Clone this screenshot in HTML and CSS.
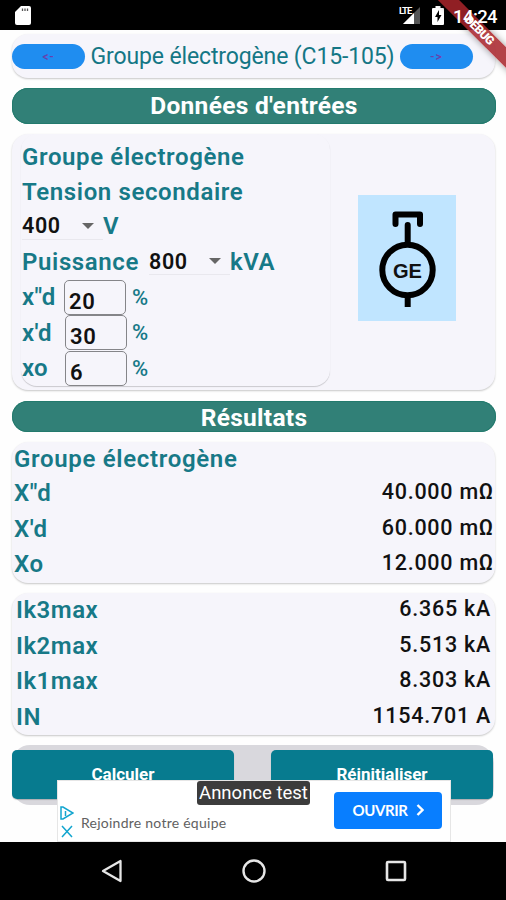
FILE: index.html
```html
<!DOCTYPE html>
<html lang="fr">
<head>
<meta charset="utf-8">
<title>Groupe électrogène</title>
<link rel="stylesheet" href="styles.css">
</head>
<body>
<div class="phone">
  <header class="status">
    <svg class="sd" width="16" height="20" viewBox="0 0 16 20"><path d="M6 1h8q2 0 2 2v15q0 2-2 2H2q-2 0-2-2V7z" fill="#fff"/><path d="M7.500 3.500v2.500M10 3.500v2.500M12.500 3.500v2.500" stroke="#555" stroke-width="1.300"/></svg>
    <div class="status-right">
      <svg class="signal" width="22" height="20" viewBox="0 0 22 20"><path d="M21 2v17H4z" fill="#555"/><path d="M15 8V19H4z" fill="#fff"/><text class="lte" x="0" y="9">LTE</text></svg>
      <svg class="battery" width="12" height="19" viewBox="0 0 12 19"><path d="M3.500 0h5v2H11q1 0 1 1v15q0 1-1 1H1q-1 0-1-1V3q0-1 1-1h2.500z" fill="#fff"/><path d="M7 4 3 11h2.500v5L9.500 9H7z" fill="#000"/></svg>
      <span class="clock">14:24</span>
    </div>
  </header>
  <div class="debug"><span>DEBUG</span></div>
  <main class="content">
    <section class="card topbar">
      <button class="pill">&lt;-</button>
      <h1 class="title">Groupe électrogène (C15-105)</h1>
      <button class="pill">-&gt;</button>
    </section>
    <h2 class="banner">Données d'entrées</h2>
    <section class="card inputs">
      <div class="form">
        <div class="row">Groupe électrogène</div>
        <div class="row secondary">Tension secondaire</div>
        <div class="row"><span class="select">400<i class="caret"></i></span><span class="unit">V</span></div>
        <div class="row"><span class="power">Puissance</span><span class="select">800<i class="caret"></i></span><span class="unit">kVA</span></div>
        <div class="row"><span class="name">x"d</span><span class="field first">20</span><span class="percent">%</span></div>
        <div class="row"><span class="name">x'd</span><span class="field">30</span><span class="percent">%</span></div>
        <div class="row"><span class="name">xo</span><span class="field">6</span><span class="percent">%</span></div>
      </div>
      <div class="diagram">
        <svg width="98" height="126" viewBox="0 0 98 126"><path fill="#c0e5ff" d="M0 0h98v126H0z"/><g fill="none" stroke="#000" stroke-width="6"><path d="M37.500 29V19.500h24.500V29M49.700 30v18" stroke-linecap="round" stroke-linejoin="round"/><circle cx="49.500" cy="75" r="25.200"/><path d="M49.700 101v11"/></g><text class="ge" x="49.500" y="82.500" text-anchor="middle" textLength="29" lengthAdjust="spacingAndGlyphs">GE</text></svg>
      </div>
    </section>
    <h2 class="banner results">Résultats</h2>
    <section class="card values">
      <div class="line heading"><span>Groupe électrogène</span></div>
      <div class="line"><span>X"d</span><b>40.000 mΩ</b></div>
      <div class="line"><span>X'd</span><b>60.000 mΩ</b></div>
      <div class="line"><span>Xo</span><b>12.000 mΩ</b></div>
    </section>
    <section class="card values currents">
      <div class="line"><span>Ik3max</span><b>6.365 kA</b></div>
      <div class="line"><span>Ik2max</span><b>5.513 kA</b></div>
      <div class="line"><span>Ik1max</span><b>8.303 kA</b></div>
      <div class="line"><span>IN</span><b>1154.701 A</b></div>
    </section>
    <section class="actions">
      <button class="action">Calculer</button>
      <button class="action">Réinitialiser</button>
    </section>
  </main>
  <aside class="ad">
    <svg class="adchoices" width="14" height="33" viewBox="0 0 14 33"><path d="M1 1v12h2L13 7 3 1zM5.500 5v5" fill="none" stroke="#12a5cf" stroke-width="1.500"/><path d="m2 20 10 11M12 20 2 31" fill="none" stroke="#12a5cf" stroke-width="1.500"/></svg>
    <span class="ad-text">Rejoindre notre équipe</span>
    <span class="ad-label">Annonce test</span>
    <button class="open">OUVRIR<svg width="8" height="12" viewBox="0 0 8 12"><path d="m1.500 1 5 5-5 5" fill="none" stroke="#fff" stroke-width="2.400"/></svg></button>
  </aside>
  <nav class="nav">
    <svg width="24" height="26" viewBox="0 0 24 26"><path d="M20.500 3v20L3 13z" fill="none" stroke="#e6e6e6" stroke-width="2.300" stroke-linejoin="round"/></svg>
    <svg width="24" height="26" viewBox="0 0 24 26"><circle cx="12" cy="13" r="10.500" fill="none" stroke="#e6e6e6" stroke-width="2.400"/></svg>
    <svg width="24" height="26" viewBox="0 0 24 26"><rect x="3" y="4" width="18" height="18" rx="1" fill="none" stroke="#e6e6e6" stroke-width="2.600"/></svg>
  </nav>
</div>
</body>
</html>
```
FILE: styles.css
```css
* { box-sizing: border-box; }
body { margin: 0; font-family: Roboto, sans-serif; background: #fff; }
button { border: 0; padding: 0; font-family: inherit; }
h1, h2 { margin: 0; }
.phone { position: relative; width: 506px; height: 900px; overflow: hidden; display: flex; flex-direction: column; background: #fefefe; }
.status { height: 30px; flex: none; background: #000; display: flex; align-items: center; justify-content: space-between; padding: 0 9px 0 15px; }
.status-right { display: flex; align-items: center; }
.signal { margin-right: 11px; }
.lte { font: 700 9.5px Roboto, sans-serif; fill: #fff; letter-spacing: -1px; }
.battery { margin-right: 9px; }
.clock { color: #fff; font-size: 18.5px; font-weight: 500; line-height: 30px; letter-spacing: -0.6px; padding-top: 3px; position: relative; z-index: 2; }
.debug { position: absolute; left: 419px; top: 23px; width: 120px; height: 15px; background: rgba(168, 36, 42, .86); transform: rotate(45deg); box-shadow: 0 0 7px rgba(0, 0, 0, .4); color: #fff; font-size: 12px; font-weight: 900; line-height: 15px; text-align: center; letter-spacing: -0.6px; }
.content { flex: 1; padding: 4px 10px 0 12px; }
.card { width: 483px; background: #f6f5fb; border-radius: 16px; box-shadow: 0 1px 2px rgba(0, 0, 0, .22); }
.topbar { height: 44px; display: flex; justify-content: space-between; padding: 10px 22px 9px 0; }
.pill { width: 73px; height: 25px; border-radius: 13px; background: #1f8df0; color: #6841ad; font-size: 12px; font-weight: 500; letter-spacing: 1px; }
.title { color: #147785; font-size: 23px; font-weight: 400; line-height: 25px; letter-spacing: -0.13px; white-space: nowrap; }
.banner { width: 484px; height: 36px; margin: 10px 0; border-radius: 16px; background: #318077; color: #fff; font-size: 24.5px; font-weight: 700; line-height: 36px; letter-spacing: 0.3px; text-align: center; box-shadow: inset 0 0 0 1px #237a6d; }
.inputs { height: 256px; display: flex; padding-left: 9px; }
.form { width: 309px; height: 252px; padding: 5px 0 0 1px; border-radius: 16px; box-shadow: 0 1px 1px rgba(0, 0, 0, .18); color: #177987; font-size: 24px; font-weight: 600; letter-spacing: 0.62px; }
.row { height: 35.500px; display: flex; align-items: center; white-space: nowrap; }
.row.secondary { height: 34px; }
.power { width: 127px; }
.select { width: 81px; height: 27px; display: flex; align-items: center; color: #111; font-size: 21.500px; border-bottom: 1px solid #e9e8ee; }
.caret { margin-left: auto; margin-right: 9px; border: 6px solid transparent; border-top-color: #666; border-bottom: 0; }
.name { width: 43px; letter-spacing: 0.3px; }
.field { width: 62px; height: 35px; border: 1px solid #858589; border-radius: 5px; padding: 6px 0 0 4px; color: #111; font-size: 22px; line-height: 30px; }
.field.first { margin: 0 1px 0 -1px; }
.percent { margin-left: 5px; font-size: 22px; font-weight: 500; letter-spacing: 0; }
.diagram { flex: 1; display: flex; align-items: center; padding: 0 0 9px 28px; }
.ge { font: 700 21px "Liberation Sans", sans-serif; fill: #111; }
.banner.results { height: 31px; line-height: 34px; margin-top: 11px; }
.values { height: 141px; padding: 0 2px; margin-bottom: 11px; }
.line { height: 35.700px; display: flex; justify-content: space-between; align-items: center; color: #177987; font-size: 24px; font-weight: 600; letter-spacing: 0.5px; padding-bottom: 2px; }
.line.heading { height: 34px; letter-spacing: 0.67px; padding-bottom: 0; }
.line b { color: #111; font-size: 21.500px; font-weight: 500; letter-spacing: 0.75px; margin-right: -1px; padding-bottom: 3px; }
.currents { height: 142px; padding: 0 5px 0 4px; margin-top: -1px; margin-bottom: 10px; }
.actions { width: 482px; height: 60px; background: #d9d8dd; border-radius: 18px; display: flex; justify-content: space-between; padding-top: 5px; }
.action { width: 222px; height: 49px; border-radius: 5px; background: #077b8f; color: #fff; font-size: 17px; font-weight: 700; padding-bottom: 2px; box-shadow: 0 1px 1px rgba(0, 0, 0, .2); }
.action + .action { margin-right: 1px; }
.ad { position: absolute; left: 57px; top: 780px; width: 394px; height: 62px; background: #fff; border: 1px solid #e6e6e6; display: flex; align-items: flex-start; }
.adchoices { margin: 25px 7px 0 2px; }
.ad-text { margin-top: 33px; color: #616161; font-family: Lato, sans-serif; font-size: 14px; line-height: 17px; letter-spacing: 0.25px; white-space: nowrap; }
.ad-label { position: absolute; left: 139px; top: 0; width: 113px; height: 24px; border-radius: 3px; background: #3c3c3c; color: #fff; font-size: 18.500px; line-height: 25px; text-align: center; white-space: nowrap; }
.open { margin: 11px 8px 0 auto; width: 108px; height: 37px; border-radius: 4px; background: #087eff; color: #fff; font: 700 15px/34px Lato, sans-serif; letter-spacing: -0.4px; display: flex; align-items: center; justify-content: center; gap: 8px; padding-bottom: 2px; }
.nav { height: 58px; flex: none; background: #000; display: flex; align-items: center; justify-content: space-between; padding: 0 98px 0 100px; }
```
